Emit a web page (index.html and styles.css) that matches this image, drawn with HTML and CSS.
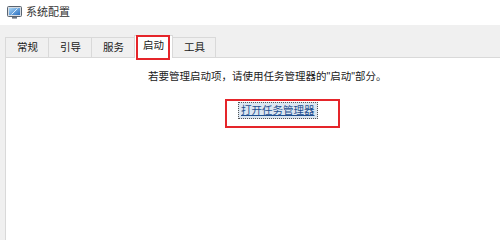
FILE: index.html
```html
<!DOCTYPE html>
<html lang="zh-CN">
<head>
<meta charset="utf-8">
<title>系统配置</title>
<link rel="stylesheet" href="styles.css">
</head>
<body>
<div class="titlebar">
  <svg class="appicon" width="15" height="13" viewBox="0 0 15 13">
    <defs>
      <linearGradient id="scr" x1="0" y1="0" x2="1" y2="1">
        <stop offset="0" stop-color="#a8d6f7"/>
        <stop offset="1" stop-color="#2a6fc0"/>
      </linearGradient>
    </defs>
    <rect x="0.5" y="0.5" width="14" height="10" rx="1" fill="#d8dde3" stroke="#5a6470"/>
    <rect x="2" y="2" width="11" height="7" fill="url(#scr)"/>
    <path d="M4.5 8.5 L10.5 2.5" stroke="#e8f4ff" stroke-width="0.9"/>
    <rect x="5" y="11" width="5" height="1.6" fill="#6b7480"/>
  </svg>
  <span class="title">系统配置</span>
</div>
<div class="window">
  <div class="tabs">
    <div class="tab">常规</div>
    <div class="tab">引导</div>
    <div class="tab">服务</div>
    <div class="tab selected">启动<span class="mark mark-tab"></span></div>
    <div class="tab">工具</div>
  </div>
  <div class="panel">
    <p class="info">若要管理启动项，请使用任务管理器的"启动"部分。</p>
    <div class="linkrow">
      <a class="link" href="#">打开任务管理器</a>
      <span class="mark mark-link"></span>
    </div>
  </div>
</div>
</body>
</html>
```

FILE: styles.css
```css
html, body {
  margin: 0;
  padding: 0;
  width: 100%;
  height: 100%;
  overflow: hidden;
  background: #f0f0f0;
  font-family: "Liberation Sans", "Noto Sans CJK SC", sans-serif;
  font-size: 10.5px;
}

body {
  display: flex;
  flex-direction: column;
  height: 100vh;
}

.titlebar {
  height: 25px;
  flex: none;
  background: #ffffff;
  display: flex;
  align-items: center;
  padding-left: 7px;
  gap: 4px;
  box-sizing: border-box;
  padding-bottom: 1px;
}

.appicon {
  display: block;
}

.title {
  color: #333333;
  font-size: 11px;
  line-height: 13px;
}

.window {
  flex: 1;
  padding: 12px 0 0 5px;
  display: flex;
  flex-direction: column;
  box-sizing: border-box;
}

.tabs {
  display: flex;
  align-items: flex-end;
  height: 20px;
  position: relative;
  z-index: 1;
}

.tab {
  box-sizing: border-box;
  height: 20px;
  padding: 0 10px 0 11px;
  line-height: 19px;
  border: 1px solid #d9d9d9;
  border-bottom: none;
  border-right: none;
  background: #f0f0f0;
  color: #1a1a1a;
  position: relative;
}

.tab:nth-child(5) {
  border-right: 1px solid #d9d9d9;
}

.tab.selected {
  height: 23px;
  margin-bottom: -1px;
  padding: 0 8px;
  line-height: 19px;
  background: #ffffff;
  border-right: 1px solid #d9d9d9;
  margin-right: -1px;
  z-index: 2;
}

.mark {
  position: absolute;
  border: 2px solid #e5252a;
  box-sizing: border-box;
  pointer-events: none;
}

.mark-tab {
  left: 1px;
  top: -1px;
  width: 34px;
  height: 25px;
}

.panel {
  flex: 1;
  background: #ffffff;
  border-top: 1px solid #d9d9d9;
  border-left: 1px solid #d9d9d9;
  display: flex;
  flex-direction: column;
  align-items: flex-start;
}

.info {
  margin: 12px 0 0 142px;
  line-height: 13px;
  color: #1a1a1a;
}

.linkrow {
  position: relative;
  margin: 19px 0 0 232px;
}

.link {
  display: inline-block;
  padding: 1px 2px;
  line-height: 13px;
  border: 1px dotted #555555;
  background: #dbe6f1;
  color: #1f4f8f;
  text-decoration: underline;
}

.mark-link {
  left: -13px;
  top: -3px;
  width: 115px;
  height: 29px;
}
```
